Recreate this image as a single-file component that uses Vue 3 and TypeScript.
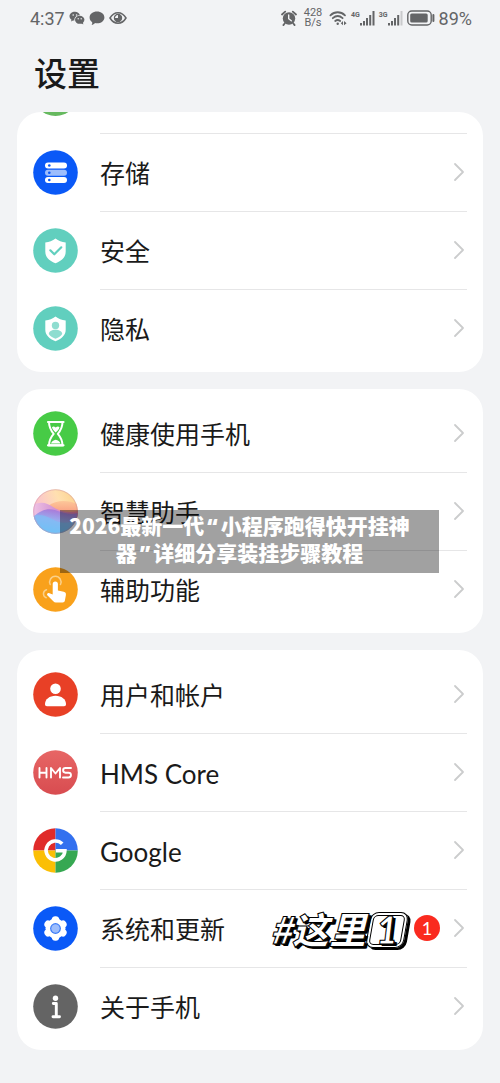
<script setup lang="ts">
type IconName =
  | 'storage' | 'security' | 'privacy' | 'balance' | 'assistant' | 'access'
  | 'user' | 'hms' | 'google' | 'system' | 'about'

interface Item {
  icon: IconName
  label: string
  latin?: boolean
  badge?: number
}

interface Group {
  id: string
  clipped: boolean
  items: Item[]
}

const groups: Group[] = [
  {
    id: 'device',
    clipped: true,
    items: [
      { icon: 'storage', label: '存储' },
      { icon: 'security', label: '安全' },
      { icon: 'privacy', label: '隐私' },
    ],
  },
  {
    id: 'assist',
    clipped: false,
    items: [
      { icon: 'balance', label: '健康使用手机' },
      { icon: 'assistant', label: '智慧助手' },
      { icon: 'access', label: '辅助功能' },
    ],
  },
  {
    id: 'account',
    clipped: false,
    items: [
      { icon: 'user', label: '用户和帐户' },
      { icon: 'hms', label: 'HMS Core', latin: true },
      { icon: 'google', label: 'Google', latin: true },
      { icon: 'system', label: '系统和更新', badge: 1 },
      { icon: 'about', label: '关于手机' },
    ],
  },
]
</script>

<template>
  <div class="screen">
    <header class="status">
      <div class="status-side">
        <span class="clock">4:37</span>
        <svg width="16" height="14" viewBox="0 0 16 14" aria-hidden="true">
          <path d="M6 .8C2.900.8.5 2.800.5 5.300c0 1.400.8 2.600 2 3.400L2 10.400l2-1c.5.1.9.2 1.400.2C5 6.500 7.400 4.300 10.900 4.300 10.300 2.200 8.400.8 6 .8z" fill="#646567" />
          <ellipse cx="10.700" cy="8.800" rx="4.700" ry="4" fill="#646567" />
          <path d="M12 12l2.300 1.400-.4-2.400z" fill="#646567" />
          <g fill="#f2f3f5"><circle cx="4.200" cy="4" r=".8" /><circle cx="7.600" cy="4" r=".8" /><circle cx="9.200" cy="7.800" r=".7" /><circle cx="12.200" cy="7.800" r=".7" /></g>
        </svg>
        <svg width="16" height="15" viewBox="0 0 16 15" aria-hidden="true">
          <path d="M8 .5c4.100 0 7.400 2.500 7.400 5.900S12.100 12.300 8 12.300c-.7 0-1.400-.1-2-.2-.8 1-2 1.700-3.400 2 .6-.9.8-1.900.6-2.900C1.600 10.100.6 8.400.6 6.400.6 3 3.900.5 8 .5z" fill="#646567" />
        </svg>
        <svg width="18" height="14" viewBox="0 0 18 14" fill="none" stroke="#646567" aria-hidden="true">
          <path d="M1 7c2-3.400 4.700-5.200 8-5.200S15 3.600 17 7c-2 3.400-4.700 5.200-8 5.200S3 10.400 1 7z" stroke-width="1.500" />
          <circle cx="9" cy="7" r="3.600" stroke-width="1.200" />
          <path d="M9 3.600V7H5.600A3.400 3.400 0 1 0 9 3.600z" fill="#646567" stroke="none" />
        </svg>
      </div>
      <div class="status-side">
        <svg width="16" height="16" viewBox="0 0 16 16" aria-hidden="true">
          <circle cx="8" cy="8.500" r="6.200" fill="#646567" />
          <path d="M1 4.500 4.200 1.600M15 4.500l-3.200-2.900M3.800 13.300l-1.400 1.800M12.200 13.300l1.400 1.800" stroke="#646567" stroke-width="1.800" stroke-linecap="round" />
          <path d="M7.700 5v3.700l2.600 2" fill="none" stroke="#f2f3f5" stroke-width="1.400" stroke-linecap="round" />
        </svg>
        <span class="speed"><span>428</span><span>B/s</span></span>
        <svg width="18" height="16" viewBox="0 0 18 16" fill="none" stroke="#646567" stroke-width="1.800" stroke-linecap="round" aria-hidden="true">
          <path d="M1.400 5.300c4.300-4.100 10.300-4.100 14.600 0M3.800 8.200c3-2.700 6.800-2.700 9.800 0M6.200 11c1.600-1.300 3.400-1.300 5 0" />
          <circle cx="8.700" cy="13.700" r="1.200" fill="#646567" stroke="none" />
          <path d="m14 11-2.200 2.200L14 15.200zM15 11l2.600 2.200L15 15.200z" fill="#646567" stroke="none" />
        </svg>
        <span class="cell">
          <span class="net">4G</span>
          <svg width="15" height="15" viewBox="0 0 15 15" fill="#646567" aria-hidden="true">
            <rect x="0" y="12" width="2" height="2.500" /><rect x="3" y="10" width="2" height="4.500" /><rect x="6" y="7" width="2" height="7.500" /><rect x="9.200" y="4" width="2" height="10.500" /><rect x="12.500" y="0" width="2" height="14.500" />
          </svg>
        </span>
        <span class="cell">
          <span class="net">3G</span>
          <svg width="15" height="15" viewBox="0 0 15 15" fill="#646567" aria-hidden="true">
            <rect x="0" y="12" width="2" height="2.500" /><rect x="3" y="10" width="2" height="4.500" /><rect x="6" y="7" width="2" height="7.500" /><rect x="9.200" y="4" width="2" height="10.500" /><rect x="12.500" y="0" width="2" height="14.500" fill="#c9cacc" />
          </svg>
        </span>
        <svg width="28" height="16" viewBox="0 0 28 16" aria-hidden="true">
          <rect x=".8" y="1" width="23.400" height="14" rx="4" fill="none" stroke="#646567" stroke-width="1.400" />
          <rect x="3.200" y="3.500" width="17.500" height="9" rx="1.500" fill="#646567" />
          <path d="M26.400 5v6" stroke="#646567" stroke-width="2" stroke-linecap="round" />
        </svg>
        <span class="percent">89%</span>
      </div>
    </header>

    <h1 class="title">设置</h1>

    <main class="groups">
      <section v-for="group in groups" :key="group.id" class="card" :class="{ clipped: group.clipped }">
        <div v-if="group.clipped" class="peek">
          <span class="peek-dot"></span>
        </div>
        <a v-for="item in group.items" :key="item.label" class="row" href="#">
          <svg class="icon" viewBox="0 0 45 45" aria-hidden="true">
            <template v-if="item.icon === 'storage'">
              <circle cx="22.500" cy="22.500" r="22.300" fill="#0a59f7" />
              <rect x="12" y="12.500" width="22" height="6" rx="3" fill="#fff" />
              <rect x="12" y="19.700" width="22" height="6" rx="3" fill="#9dbdfc" />
              <rect x="12" y="27" width="22" height="6" rx="3" fill="#fff" />
              <g fill="#0a59f7"><circle cx="16.300" cy="15.500" r="1.300" /><circle cx="16.300" cy="22.700" r="1.300" /><circle cx="16.300" cy="30" r="1.300" /></g>
            </template>
            <template v-else-if="item.icon === 'security'">
              <circle cx="22.500" cy="22.500" r="22.300" fill="#61cfbe" />
              <path d="M22.500 10.500c3 2.200 6.200 3.500 10.200 4v9.300c0 5.200-4 9.200-10.200 11.500-6.200-2.300-10.200-6.300-10.200-11.500v-9.300c4-.5 7.200-1.800 10.200-4z" fill="#fff" />
              <path d="m17.300 22.300 4 4 7-7" fill="none" stroke="#61cfbe" stroke-width="2.200" stroke-linecap="round" stroke-linejoin="round" />
            </template>
            <template v-else-if="item.icon === 'privacy'">
              <circle cx="22.500" cy="22.500" r="22.300" fill="#61cfbe" />
              <path d="M22.500 10.500c3 2.200 6.200 3.500 10.200 4v9.300c0 5.200-4 9.200-10.200 11.500-6.200-2.300-10.200-6.300-10.200-11.500v-9.300c4-.5 7.200-1.800 10.200-4z" fill="#fff" />
              <circle cx="22.500" cy="19.500" r="3.700" fill="#8fddd0" />
              <path d="M15.800 28c0-2.600 3-4.300 6.700-4.300s6.700 1.700 6.700 4.300c-1.300 2-3.600 3.500-6.700 4.800-3.100-1.300-5.400-2.800-6.700-4.800z" fill="#8fddd0" />
            </template>
            <template v-else-if="item.icon === 'balance'">
              <circle cx="22.500" cy="22.500" r="22.300" fill="#47cb46" />
              <path d="M16 11h13.500c0 5-1 7.500-4.700 11.800C28.500 27 29.500 29.500 29.500 34.300H16c0-4.800 1-7.300 4.700-11.500C17 18.500 16 16 16 11z" fill="none" stroke="#fff" stroke-width="2" stroke-linejoin="round" />
              <path d="M15 11h15.500M15 34.300h15.500" stroke="#fff" stroke-width="2.200" stroke-linecap="round" />
              <path d="M19 16.200c1.500-1.400 2.500-.3 3.700.3 1.300-.8 2.400-1.600 3.800-.3-.4 2-2 3.800-3.800 5.300-1.800-1.500-3.300-3.300-3.700-5.300zM18 32.500c.8-2.200 2.500-3.200 4.700-3.800 2.300.6 4 1.600 4.800 3.800z" fill="#fff" />
            </template>
            <template v-else-if="item.icon === 'assistant'">
              <defs>
                <linearGradient id="orb-base" x1="0" y1=".4" x2="1" y2="0"><stop offset="0" stop-color="#f9bdd4" /><stop offset=".55" stop-color="#ffe0b0" /><stop offset="1" stop-color="#fbcf84" /></linearGradient>
                <linearGradient id="orb-wave" x1="0" y1="0" x2="1" y2="0"><stop offset="0" stop-color="#efc3e4" /><stop offset=".5" stop-color="#d291d2" /><stop offset="1" stop-color="#f0809a" /></linearGradient>
                <linearGradient id="orb-peach" x1="0" y1="0" x2="0" y2="1"><stop offset="0" stop-color="#fdc799" /><stop offset="1" stop-color="#f88a76" /></linearGradient>
                <linearGradient id="orb-sea" x1=".7" y1="0" x2=".4" y2="1"><stop offset="0" stop-color="#ad70d4" /><stop offset=".45" stop-color="#9aaaee" /><stop offset="1" stop-color="#5cc0f6" /></linearGradient>
                <clipPath id="orb-clip"><circle cx="22.500" cy="22.500" r="22.300" /></clipPath>
              </defs>
              <g clip-path="url(#orb-clip)">
                <rect width="45" height="45" fill="url(#orb-base)" />
                <path d="M15 17c8-6 20-7 31-1v14H15z" fill="url(#orb-peach)" />
                <path d="M0 16c8-4 14-2 20 2 8 5 16 6 25 4v12H0z" fill="url(#orb-wave)" />
                <path d="M0 28c8-7 14-9 22-7 8 3 16 5 23 3v21H0z" fill="url(#orb-sea)" />
                <path d="M0 27c10-3 16 2 23 5s15 2 22-2v15H0z" fill="#79c3f6" opacity=".6" />
              </g>
              <circle cx="22.500" cy="22.500" r="21.800" fill="none" stroke="#c98ca4" opacity=".45" />
            </template>
            <template v-else-if="item.icon === 'access'">
              <circle cx="22.500" cy="22.500" r="22.300" fill="#f9a11b" />
              <path d="M19.700 17a2.600 2.600 0 0 1 5.200 0v6.500l5.800 1.300c1.700.4 2.500 1.500 2.200 3.200l-1 5.500c-.2 1.300-1 2-2.300 2h-6.700c-1 0-1.900-.4-2.600-1.200l-6-6c-.8-1 .4-2.600 1.600-2.200l3.800 1.500z" fill="#fff" />
              <path d="M17.200 17.500a5.700 5.700 0 1 1 10.300 0" fill="none" stroke="#fbd089" stroke-width="1.500" stroke-linecap="round" />
              <path d="M13.500 22.800c-4 1.200-4 6.300-.3 8" fill="none" stroke="#fbd089" stroke-width="1.500" stroke-linecap="round" />
            </template>
            <template v-else-if="item.icon === 'user'">
              <circle cx="22.500" cy="22.500" r="22.300" fill="#e84026" />
              <circle cx="22.500" cy="16.700" r="5.300" fill="#fff" />
              <path d="M12 32.300c0-5 4.500-8.500 10.500-8.500S33 27.300 33 32.300c0 1.300-.7 2-2 2H14c-1.300 0-2-.7-2-2z" fill="#fff" />
            </template>
            <template v-else-if="item.icon === 'hms'">
              <defs><linearGradient id="hms-fill" x1="0" y1="0" x2="0" y2="1"><stop offset="0" stop-color="#e76665" /><stop offset="1" stop-color="#d84c50" /></linearGradient></defs>
              <circle cx="22.500" cy="22.500" r="22.300" fill="url(#hms-fill)" />
              <g fill="none" stroke="#fff" stroke-width="1.900" stroke-linejoin="round" stroke-linecap="round">
                <path d="M6.500 18v9.500M13.500 18v9.500M6.500 22.800h7M18 27.500V18l4.500 5.500L27 18v9.500M38 18h-5.500c-3.200 0-3.200 4.700 0 4.700h3c3.300 0 3.300 4.800 0 4.800H30" />
              </g>
            </template>
            <template v-else-if="item.icon === 'google'">
              <defs><clipPath id="g-clip"><circle cx="22.500" cy="22.500" r="22.300" /></clipPath></defs>
              <g clip-path="url(#g-clip)">
                <path d="M0 0h22.500v22.500H0z" fill="#e02b2a" /><path d="M22.500 0H45v22.500H22.500z" fill="#3370ef" />
                <path d="M0 22.500h22.500V45H0z" fill="#fbbf05" /><path d="M22.500 22.500H45V45H22.500z" fill="#36a852" />
              </g>
              <path d="M29.200 15.800a9.400 9.400 0 1 0 2.700 6.900h-9" fill="none" stroke="#fff" stroke-width="3.600" />
            </template>
            <template v-else-if="item.icon === 'system'">
              <circle cx="22.500" cy="22.500" r="22.300" fill="#0a59f7" />
              <g fill="#fff">
                <circle cx="22.500" cy="22.500" r="10" />
                <rect v-for="angle in [0, 60, 120]" :key="angle" x="18.700" y="10.300" width="7.600" height="24.400" rx="3.600" :transform="`rotate(${angle} 22.500 22.500)`" />
              </g>
              <circle cx="22.500" cy="22.500" r="5.400" fill="#3b7bf8" />
              <circle cx="22.500" cy="22.500" r="4.200" fill="#9dbdfc" />
            </template>
            <template v-else>
              <circle cx="22.500" cy="22.500" r="22.300" fill="#646464" />
              <circle cx="22.500" cy="14.200" r="2.700" fill="#fff" />
              <path d="M20.300 19.500h3v13M20 32.700h6.500" fill="none" stroke="#fff" stroke-width="2.900" stroke-linecap="round" stroke-linejoin="round" />
            </template>
          </svg>
          <span class="body">
            <span class="label" :class="{ latin: item.latin }">{{ item.label }}</span>
            <template v-if="item.badge">
              <span class="callout">#这里<span class="callout-box">1</span></span>
              <span class="badge">{{ item.badge }}</span>
            </template>
            <svg class="chevron" width="12" height="20" viewBox="0 0 12 20" aria-hidden="true">
              <path d="m2 2 8 8-8 8" fill="none" stroke="#cbcccd" stroke-width="1.800" stroke-linecap="round" stroke-linejoin="round" />
            </svg>
          </span>
        </a>
      </section>
    </main>

    <p class="banner">2026最新一代<span class="quote">“</span>小程序跑得快开挂神器<span class="quote">”</span>详细分享装挂步骤教程</p>
  </div>
</template>

<style>
body {
  margin: 0;
  background: #f2f3f5;
}
</style>

<style scoped>
.screen {
  position: relative;
  min-height: 100vh;
  padding: 0 17px 33px;
  box-sizing: border-box;
  background: #f2f3f5;
  color: #1a1a1a;
  font-family: Lato, "Noto Sans CJK SC", sans-serif;
}

.status {
  display: flex;
  align-items: center;
  justify-content: space-between;
  height: 36px;
  padding: 0 11px 0 13px;
  color: #646567;
  font-family: Roboto, "Noto Sans CJK SC", sans-serif;
}

.status-side {
  display: flex;
  align-items: center;
  gap: 4px;
}

.clock {
  font-size: 18px;
}

.speed {
  display: flex;
  flex-direction: column;
  width: 24px;
  font-size: 11px;
  line-height: 10px;
  text-align: center;
}

.cell {
  display: flex;
  align-items: flex-start;
}

.net {
  font-size: 7px;
  line-height: 8px;
  font-weight: 700;
}

.percent {
  font-size: 18px;
}

.title {
  height: 76px;
  margin: 0;
  padding-left: 17px;
  font-size: 33px;
  font-weight: 500;
  line-height: 74px;
}

.groups {
  display: flex;
  flex-direction: column;
  gap: 17px;
}

.card {
  padding: 5px 16px;
  border-radius: 24px;
  background: #fff;
  overflow: hidden;
}

.clipped {
  padding-top: 0;
}

.peek {
  display: flex;
  align-items: flex-end;
  height: 21px;
}

.peek-dot {
  flex: none;
  width: 45px;
  height: 45px;
  margin-bottom: 17px;
  border-radius: 50%;
  background: #66b95f;
}

.row {
  display: flex;
  align-items: center;
  gap: 22px;
  height: 78px;
  color: inherit;
  text-decoration: none;
}

.icon {
  flex: none;
  width: 45px;
  height: 45px;
}

.body {
  display: flex;
  flex: 1;
  align-items: center;
  height: 100%;
  padding-bottom: 2px;
  box-sizing: border-box;
  border-top: 1px solid #e6e6e7;
}

.card:not(.clipped) .row:first-child .body {
  border-top-color: transparent;
}

.label {
  flex: 1;
  padding-top: 2px;
  font-size: 25px;
  line-height: 36px;
  white-space: nowrap;
}

.latin {
  padding-top: 4px;
  font-size: 26px;
}

.chevron {
  margin-right: 2px;
}

.badge {
  width: 26px;
  margin-right: 13px;
  border-radius: 50%;
  background: #fa2a1f;
  color: #fff;
  font-size: 18px;
  line-height: 26px;
  text-align: center;
}

.callout {
  margin-right: 6px;
  padding-top: 2px;
  color: #fff;
  font-family: "Noto Sans CJK SC", sans-serif;
  font-size: 37px;
  font-style: italic;
  font-weight: 900;
  line-height: 36px;
  white-space: nowrap;
  -webkit-text-stroke: 1px #000;
  text-shadow: 1px 1px 0 #000, 2px 2px 0 #000, 3px 2px 0 #000;
}

.callout-box {
  position: relative;
  display: inline-block;
  width: 42px;
  font-family: Lato, sans-serif;
  text-align: center;
}

.callout-box::before {
  content: "";
  position: absolute;
  inset: 0 2px;
  border: 4px double #000;
  border-radius: 8px;
  box-shadow: 3px 2px 0 #000;
  transform: skewX(-10deg);
}

.banner {
  position: absolute;
  top: 510px;
  right: 61px;
  left: 60px;
  margin: 0;
  padding: 2px 22px 7px 2px;
  background: rgba(0, 0, 0, 0.37);
  color: #fff;
  font-family: "Noto Sans CJK SC", sans-serif;
  font-size: 21px;
  font-weight: 900;
  line-height: 27px;
  text-align: center;
}

.quote {
  padding: 0 3px;
  font-family: "Open Sans", sans-serif;
  line-height: 20px;
}
</style>
